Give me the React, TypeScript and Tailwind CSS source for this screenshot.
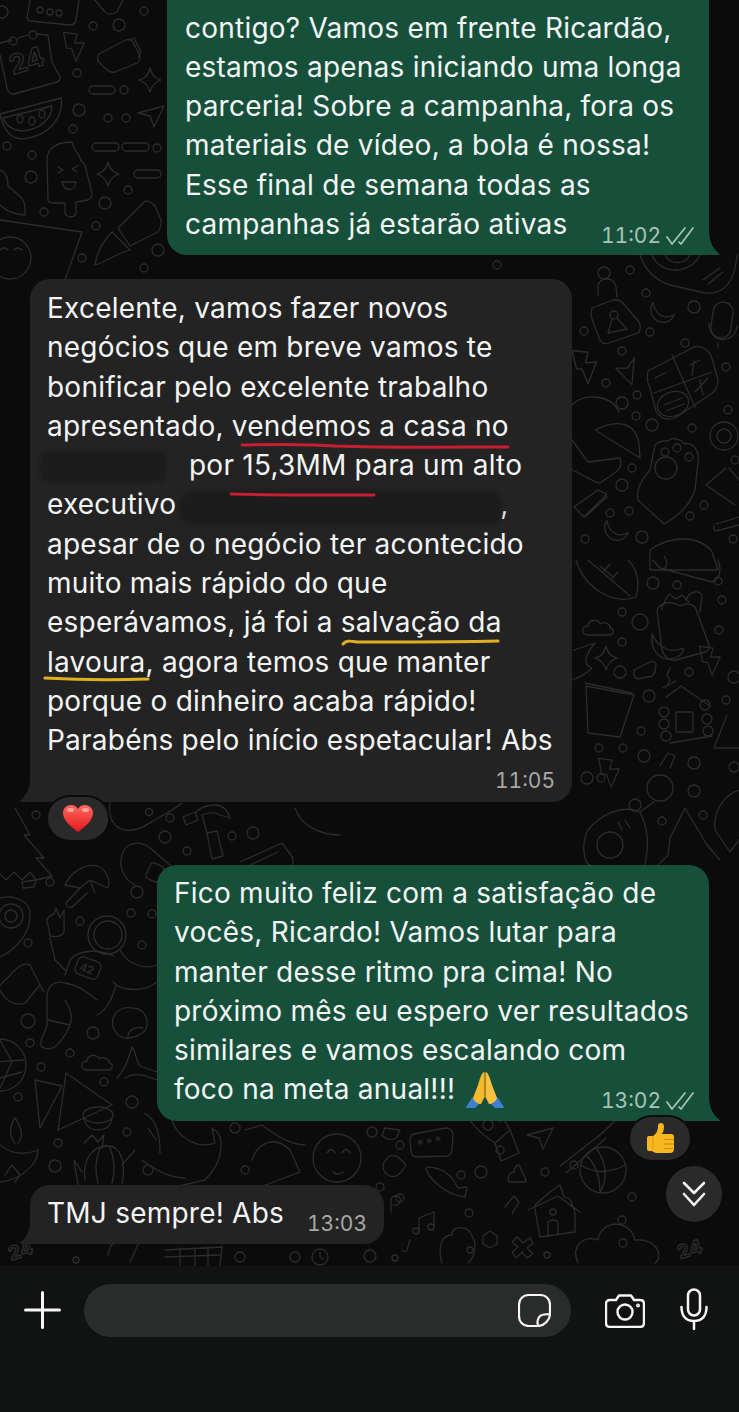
import React from "react";

const lineCls = "block h-[39.3px] leading-[39.3px] whitespace-nowrap";
const timeCls = "text-[21px] leading-[24px] tracking-normal tabular-nums";

function Ticks() {
  return (
    <svg width="28" height="20" viewBox="0 0 28 20" fill="none" stroke="#a9c4b6" strokeWidth="1.700" strokeLinecap="round" strokeLinejoin="round">
      <path d="M1 11l5 7L19 2" />
      <path d="M13 16l2 2L27 2" />
    </svg>
  );
}

function Tail({ side, color }: { side: "l" | "r"; color: string }) {
  return side === "r" ? (
    <svg className="absolute right-[-11px] bottom-0" width="18" height="26" viewBox="0 0 18 26">
      <path d="M0 0H7C7 10 9 18 17 24.500L18 26H0Z" fill={color} />
    </svg>
  ) : (
    <svg className="absolute left-[-10px] bottom-0" width="18" height="28" viewBox="0 0 18 28">
      <path d="M18 0H11C11 10 8 20 1 26L0 28H18Z" fill={color} />
    </svg>
  );
}

function Lightning({ x, y, s = 1, r = 0 }: { x: number; y: number; s?: number; r?: number }) {
  return (
    <path transform={`translate(${x} ${y}) rotate(${r}) scale(${s})`} d="M-10-16L4-12L0-3L10-2L-1 16L-4 2L-9 1Z" />
  );
}
function Sparkle({ x, y }: { x: number; y: number }) {
  return <path transform={`translate(${x} ${y})`} d="M0-12C2-4 5-2 11 0C5 2 2 5 0 12C-2 5-5 2-11 0C-5-2-2-4 0-12Z" />;
}
function Plane({ x, y, r = 0 }: { x: number; y: number; r?: number }) {
  return <path transform={`translate(${x} ${y}) rotate(${r})`} d="M-13-3L13-10L3 11L-1 0Z" />;
}
function Moon({ x, y, r = 0 }: { x: number; y: number; r?: number }) {
  return <path transform={`translate(${x} ${y}) rotate(${r})`} d="M-5-13C-12-4-8 8 4 9C9 9 12 6 14 3C6 6-5 3-5-13Z" />;
}
function Cloud({ x, y }: { x: number; y: number }) {
  return <path transform={`translate(${x} ${y})`} d="M-10 8C-17 8-17-1-10-1C-9-8 0-8 2-3C6-6 13-3 12 1C17 2 16 8 11 8Z" />;
}

const dots: [number, number, number][] = [
  [93, 26, 4], [119, 25, 6], [144, 11, 4], [77, 73, 4], [124, 90, 4], [79, 110, 6], [108, 118, 4], [126, 118, 4], [73, 129, 4], [7, 146, 4], [32, 155, 4], [31, 177, 6], [128, 190, 4], [105, 203, 6], [44, 212, 4], [96, 226, 4], [82, 258, 4], [158, 250, 6], [144, 268, 4], [157, 148, 4],
  [497, 265, 4], [604, 273, 6], [630, 270, 4], [646, 293, 4], [694, 307, 6], [584, 331, 4], [650, 332, 4], [685, 343, 4], [622, 351, 4], [606, 383, 4], [726, 367, 4], [622, 403, 6], [637, 395, 4], [636, 416, 4], [652, 425, 6], [692, 428, 4], [728, 410, 4], [632, 468, 4], [622, 485, 6], [610, 513, 4], [629, 511, 4], [585, 539, 4], [642, 537, 6], [690, 516, 4], [735, 460, 4], [704, 505, 4], [733, 539, 4],
  [653, 583, 6], [677, 585, 4], [718, 581, 4], [722, 600, 4], [622, 612, 4], [640, 622, 8], [622, 642, 4], [719, 630, 4], [620, 672, 6], [689, 672, 4], [649, 696, 6], [726, 700, 4], [734, 677, 6], [641, 731, 4], [599, 748, 4], [623, 748, 4], [644, 756, 6], [601, 778, 4], [587, 778, 6], [694, 763, 6], [734, 767, 5], [635, 805, 6], [694, 791, 6], [703, 815, 4], [662, 821, 4],
  [36, 815, 4], [149, 812, 3.500], [170, 818, 4], [165, 837, 6], [232, 836, 4], [253, 833, 6], [187, 851, 4], [50, 882, 4], [137, 892, 6], [131, 913, 4], [152, 914, 4], [80, 921, 4], [28, 943, 4], [142, 945, 4], [28, 1021, 7], [93, 1033, 6], [30, 1043, 4], [70, 1053, 4], [41, 1067, 4], [104, 1082, 4], [18, 1097, 4], [132, 1102, 6], [127, 1132, 4], [58, 1143, 4], [55, 1166, 6], [148, 1170, 5],
  [235, 1128, 5], [245, 1170, 4], [372, 1132, 5], [400, 1145, 4], [380, 1187, 4], [461, 1175, 4], [481, 1172, 6], [500, 1150, 4], [545, 1172, 4], [574, 1165, 4], [400, 1198, 4], [469, 1213, 4], [632, 1197, 4], [622, 1220, 4], [623, 1243, 4], [295, 1257, 5], [240, 1257, 5], [76, 1260, 3], [470, 1250, 3], [547, 1255, 3], [395, 1258, 3],
];

const pills: [number, number, number, number][] = [
  [89, 86, 26, 8], [92, 143, 27, 8], [122, 143, 27, 8], [134, 170, 27, 8],
];

function Doodles() {
  return (
    <svg className="absolute inset-0" width="739" height="1266" viewBox="0 0 739 1266" fill="none" stroke="#2c2c2c" strokeWidth="1.300" strokeLinecap="round" strokeLinejoin="round">
      {dots.map(([x, y, r], i) => <circle key={i} cx={x} cy={y} r={r} />)}
      {pills.map(([x, y, w, h], i) => <rect key={i} x={x} y={y} width={w} height={h} rx={4} />)}

      {/* top-left */}
      <path d="M30 0L27 17Q27 20 30 21L70 25Q75 25 76 20L79 0" />
      <circle cx="40" cy="10" r="3" /><circle cx="50" cy="12" r="3" /><circle cx="59" cy="13" r="3" />
      <path d="M95 0L105 12Q110 16 117 12L123 0" />
      <circle cx="2" cy="12" r="6" />
      <path d="M0 43L12 40M18 38L28 35M36 34L48 35Q50 50 52 62L60 77Q61 80 57 82L14 94Q8 94 7 88L0 55" />
      <circle cx="13" cy="41" r="4" /><circle cx="33" cy="35" r="4" />
      <text x="13" y="75" fontSize="27" transform="rotate(-18 13 75)" fontFamily="Inter, sans-serif" fontWeight="700">24</text>
      <Lightning x={75} y={46} s={0.95} r={-8} />
      <path d="M99 54L126 40Q130 38 133 42L140 56Q141 60 137 63L115 72Q110 73 107 70L98 61Q97 56 99 54ZM129 40L134 38L141 52L138 58" />
      <Sparkle x={150} y={80} /><Plane x={151} y={116} />
      <path d="M0 114L61 98C64 118 48 137 22 139C10 139 3 128 0 114Z" />
      <path d="M3 118L52 106C52 120 38 130 22 131C12 130 6 126 3 118Z" />
      <ellipse cx="20" cy="119" rx="3" ry="4" /><ellipse cx="32" cy="121" rx="3" ry="4" /><ellipse cx="42" cy="114" rx="3" ry="4" />
      <path d="M48 200L47 160C47 148 57 142 72 142C73 150 78 152 80 158C81 163 84 163 85 165L92 193Q92 198 88 200L76 202L76 212Q76 217 70 217Q65 216 65 212L65 203L53 203Q48 203 48 200Z" />
      <path d="M58 167L63 170L58 173M78 166L72 169L77 172M62 182H76C75 192 64 192 62 182Z" />
      <Sparkle x={108} y={174} />
      <path d="M0 170C7 172 8 180 8 186L22 198Q26 205 25 215C12 214 5 210 0 205" />
      <path d="M118 228L144 202Q148 199 155 206L161 220Q162 226 158 232L130 246ZM112 232L130 250L124 252C115 255 105 262 95 265C97 254 100 245 112 232Z" />
      <circle cx="10" cy="258" r="21" /><path d="M0 220L82 232L65 280M0 250Q5 246 8 250M14 250Q18 246 22 250" />

      {/* right top */}
      <path d="M640 255C645 270 655 280 670 285L705 293C725 295 735 280 737 255" />
      <path d="M652 255C660 275 690 275 700 255M665 255C670 265 685 265 690 255M703 280L720 268M708 284L723 272" />
      <path d="M598 295V287C598 277 614 275 616 287L617 297" />
      <path d="M592 308L613 300Q618 299 622 302L639 322Q642 328 638 333L609 343Q603 345 600 340L593 322Q590 315 592 308Z" />
      <circle cx="614" cy="315" r="4" /><path d="M612 319L608 333L627 329L617 318" />
      <Moon x={660} y={314} r={-10} />
      <rect x="712" y="302" width="20" height="36" rx="10" transform="rotate(8 722 320)" />
      <path d="M709 323C709 344 735 345 737 326M718 343V348" />
      <path d="M648 371L694 347Q704 345 711 355L718 380Q718 391 708 396L675 418Q662 422 656 411L650 388Q646 380 648 371ZM672 355L695 407M654 393L712 372M655 378L665 373M690 365L700 360M694 361L692 375M695 392L708 378M700 380L703 395" />
      <ellipse cx="673" cy="404" rx="16" ry="12" transform="rotate(-20 673 404)" />
      <path d="M664 405L682 398M666 411L684 404" />
      <Lightning x={586} y={366} s={1.100} r={-10} /><Plane x={627} y={369} r={110} />
      <path d="M572 405C585 392 612 395 619 412M595 430C615 420 635 420 639 444L640 458L595 430ZM572 440L588 462L620 458C624 470 615 472 600 483C594 483 585 475 572 470" />
      <path d="M574 507L598 490L607 494L584 517ZM585 517L607 497" />
      <Moon x={614} y={532} r={-10} />
      <path d="M655 445Q660 440 668 441C672 436 682 440 684 444C694 442 700 452 698 462L695 490C690 505 680 515 664 524L638 500C636 490 640 482 650 470Z" />
      <circle cx="666" cy="468" r="11" /><circle cx="665" cy="452" r="4" /><circle cx="677" cy="448" r="4" /><circle cx="689" cy="457" r="4" />
      <circle cx="724" cy="436" r="14" /><circle cx="724" cy="436" r="7" />
      <path d="M726 468L706 485L735 505M729 468L739 480" />
      <path d="M716 524L739 517M714 526Q712 532 720 530L739 525" />
      <path d="M650 550C670 535 700 535 712 552L718 570L650 570Z" />
      <path d="M664 556C670 565 665 570 660 570" />
      <path d="M576 560C585 590 615 605 636 597C640 582 638 570 628 560M588 560L630 596M600 566L612 576M604 571L610 564M612 578L618 572" />
      <path d="M653 560L660 568L712 582Q720 580 720 568L718 560" />
      <path d="M662 610L662 606L669 594L676 599L682 595L689 602M657 610C662 601 672 601 680 606C690 601 696 606 697 612L709 645Q710 650 705 652L676 660Q666 662 662 650Z" />
      <path d="M652 634C650 650 660 660 670 659C680 658 684 652 683 648C672 654 658 648 652 634Z" />
      <path d="M686 600C690 590 700 590 702 596L700 612" />
      <Cloud x={598} y={627} />
      <Sparkle x={606} y={658} />
      <path d="M574 650L595 643C585 655 582 665 592 668C585 675 578 678 572 680" />
      <path d="M634 670L650 662Q654 660 656 664L655 672L652 676L638 679Q634 678 634 674Z" />
      <path d="M670 668L667 675L670 680L667 686" />
      <Lightning x={711} y={660} s={0.950} r={-8} />
      <path d="M586 686L634 695L620 737L588 733Z" /><path d="M585 683L632 693" />
      <path d="M666 697L681 686L710 706M663 688L676 681" />
      <circle cx="664" cy="712" r="5" /><circle cx="664" cy="724" r="5" /><circle cx="666" cy="736" r="5" /><circle cx="705" cy="705" r="5" /><circle cx="707" cy="719" r="5" /><circle cx="708" cy="731" r="5" />
      <rect x="676" y="712" width="17" height="20" rx="1" /><path d="M670 743L712 736" />
      <path d="M727 715L714 748H739" />
      <Lightning x={610} y={772} s={0.950} r={-8} />
      <path d="M660 766L668 753L675 756L670 768" /><circle cx="660" cy="788" r="13" />
      <path d="M654 802L640 812C622 804 600 815 588 830C580 845 585 865 590 865M640 812C650 832 648 850 645 865" />
      <circle cx="610" cy="845" r="13" />
      <path d="M618 822L622 830M625 820L630 828" />
      <path d="M685 808L670 838L668 855L658 865M685 808L707 845L720 860" />
      <path d="M739 790C722 795 713 815 715 830L730 852L739 840" />

      {/* gap between bubbles 2 and 3 */}
      <path d="M15 808L30 835L24 835L44 858L36 858L52 876L36 880L30 872L22 880L14 872L6 880L0 874M22 882L36 880L34 887L23 888Z" />
      <path d="M110 803C108 815 112 828 125 830C140 832 150 822 160 817C170 812 175 808 182 803" />
      <path d="M183 817L186 825L198 820L195 812ZM195 813C205 803 225 800 230 818L220 815C215 812 208 812 202 815L207 833L217 831L223 856L212 859L207 833" />
      <path d="M240 862L282 843L293 858L293 865M248 866L278 852" />
      <path d="M122 855C125 842 140 840 150 848L178 872L176 880M122 855C118 868 125 880 135 885" />
      <rect x="148" y="864" width="14" height="17" rx="3" transform="rotate(25 155 872)" />
      <path d="M295 808C300 825 320 835 340 835" />

      {/* left mid */}
      <path d="M65 885C70 873 85 863 97 866C106 869 111 880 108 888L90 880L80 888ZM80 888L66 903Q66 908 72 907L87 893M90 880L95 893" />
      <path d="M0 898C10 895 30 898 30 915C30 935 15 950 0 957" />
      <circle cx="11" cy="916" r="6" /><circle cx="11" cy="916" r="12" />
      <path d="M48 925C44 918 52 914 54 914L56 908L60 918L64 910L64 925C66 935 60 938 50 936ZM50 938L55 960L65 970" />
      <circle cx="107" cy="935" r="19" /><circle cx="108" cy="935" r="14" />
      <path d="M120 950C128 965 145 970 157 965M114 956C100 950 80 948 70 960L65 975M113 982C122 992 145 992 157 982" />
      <rect x="76" y="959" width="24" height="18" rx="5" transform="rotate(20 88 968)" />
      <text x="80" y="973" fontSize="11" fontWeight="600" fontFamily="Inter, sans-serif" fill="#2c2c2c" stroke="none" transform="rotate(20 88 968)">42</text>
      <path d="M0 985C12 975 20 960 30 965L40 985L44 992M0 990C5 1000 15 1007 25 1003L40 985" />
      <path d="M47 1000C46 985 55 980 65 983C80 985 90 995 97 1000M65 1000C72 1010 72 1020 70 1025L48 1020M47 1000V1025C45 1035 38 1040 42 1047C50 1052 60 1048 70 1025M97 1015C105 1012 112 1000 116 985" />
      <path d="M113 1027C110 1015 120 1006 132 1008C142 1008 148 1016 147 1025C146 1035 130 1040 122 1037C118 1036 115 1032 113 1027ZM128 1037C128 1030 135 1026 143 1028" />
      <circle cx="0" cy="1065" r="26" /><path d="M0 1040L12 1062L0 1088M-5 1062L24 1060M0 1078L22 1072" />
      <Cloud x={97} y={1062} />
      <path d="M117 1078C125 1070 128 1060 132 1047C136 1052 136 1060 140 1066L157 1072M125 1078C135 1072 145 1075 157 1080" />
      <path d="M35 1080L62 1086L40 1128ZM66 1073L112 1105L58 1130Z" />
      <ellipse cx="98" cy="1115" rx="15" ry="8" /><path d="M84 1118Q86 1130 98 1130Q110 1130 112 1118" />
      <path d="M0 1145C12 1155 25 1155 38 1150C38 1165 20 1180 0 1182M15 1143C8 1135 10 1125 15 1118C20 1125 25 1135 18 1143M5 1175L12 1165L20 1175L15 1182" />
      <path d="M85 1180C82 1160 92 1146 108 1146C122 1146 126 1165 122 1183M100 1148C95 1160 95 1172 98 1183M110 1148C115 1160 115 1172 112 1183M84 1143L92 1135L98 1142L104 1135L102 1148M122 1165L135 1150M82 1172L74 1160L78 1185" />
      <path d="M144 1113C154 1118 160 1128 160 1153M148 1128L156 1140" />

      {/* bottom strip */}
      <path d="M178 1113L172 1120C176 1135 195 1150 215 1143L212 1128C225 1135 225 1160 205 1180L175 1187" />
      <path d="M142 1160C155 1170 170 1178 185 1178" />
      <path d="M245 1130L262 1125C275 1135 290 1145 305 1145M252 1160C258 1142 275 1135 290 1150L300 1172L260 1187" />
      <circle cx="337" cy="1158" r="24" />
      <path d="M327 1153Q331 1146 335 1153M342 1153Q346 1146 350 1153M333 1172Q337 1176 344 1172" />
      <path d="M382 1135L385 1128L400 1130L396 1138Q388 1142 382 1135Z" />
      <path d="M386 1160C392 1150 400 1158 406 1165C400 1175 396 1178 390 1176C384 1174 380 1166 386 1160Z" />
      <path d="M414 1134L446 1128Q452 1128 453 1134L452 1150Q452 1155 447 1156L416 1157Q411 1156 411 1151L410 1140Q410 1135 414 1134Z" />
      <text x="418" y="1150" fontSize="14" stroke="none" fill="#2c2c2c" transform="rotate(-10 418 1150)" fontFamily="Inter, sans-serif" letterSpacing="2">***</text>
      <path d="M462 1105C466 1120 482 1135 495 1143L510 1130C505 1118 495 1110 490 1105M495 1143L501 1161L519 1153L510 1130" />
      <circle cx="488" cy="1125" r="5" />
      <path d="M488 1110V1114M478 1120L474 1117M499 1122L503 1119" />
      <Plane x={540} y={1138} />
      <path d="M560 1166L600 1135M566 1173L606 1138M600 1135L618 1118" />
      <path d="M426 1168C428 1178 445 1195 465 1197L467 1187L458 1188L452 1178L445 1172C438 1168 430 1166 426 1168Z" />
      <path d="M509 1182C506 1175 512 1172 514 1172C514 1166 520 1163 520 1166C520 1170 526 1176 526 1182Z" />
      <path d="M505 1207L514 1196L519 1202L512 1214" />
      <path d="M535 1205L550 1192L560 1185L564 1197L570 1199L575 1212L575 1232L540 1237L535 1210ZM528 1210L558 1196L580 1212" />
      <path d="M548 1236V1222Q553 1218 558 1222V1234" /><circle cx="553" cy="1212" r="3" />
      <circle cx="603" cy="1170" r="23" /><path d="M581 1165Q600 1178 626 1165M596 1148Q612 1170 600 1193M586 1155Q600 1168 600 1192" />
      <path d="M391 1212V1200Q391 1196 396 1196Q402 1197 400 1202Q398 1206 393 1205" />
      <path d="M419 1218L434 1212V1226M419 1218V1231" /><circle cx="416" cy="1231" r="3" /><circle cx="431" cy="1227" r="3" />
      <path d="M442 1263C438 1250 440 1235 452 1235C452 1224 470 1226 472 1236C478 1245 474 1258 468 1263" />
      <path d="M490 1231L497 1236L497 1244L490 1248L483 1244L483 1236Z" />
      <path d="M517 1237L523 1243L530 1238L533 1243L527 1248L533 1254L527 1258L522 1252L516 1258L512 1252L518 1247L512 1242Z" />
      <path d="M578 1263C570 1245 585 1235 598 1240C600 1220 630 1218 635 1240C655 1238 665 1255 655 1263" />
      <text x="8" y="1258" fontSize="19" transform="rotate(-18 18 1250)" fontFamily="Inter, sans-serif" fontWeight="700">24</text>
      <text x="677" y="1256" fontSize="19" transform="rotate(-18 689 1248)" fontFamily="Inter, sans-serif" fontWeight="700">24</text>
      <path d="M108 1255C110 1240 125 1232 140 1240L130 1262" />
      <path d="M165 1250L222 1247L220 1266M165 1257L220 1255M180 1248V1266M195 1248V1266M208 1248V1266" />
      <circle cx="320" cy="1257" r="8" /><path d="M320 1252V1257L323 1259" />
      <path d="M410 1240L407 1250Q404 1253 402 1250" /><circle cx="370" cy="1256" r="6" />
    </svg>
  );
}

function Heart() {
  return (
    <svg width="32" height="32" viewBox="0 0 32 32">
      <defs>
        <linearGradient id="hg" x1="0" y1="0" x2="0" y2="1">
          <stop offset="0" stopColor="#ff6a5e" />
          <stop offset="1" stopColor="#e8161b" />
        </linearGradient>
      </defs>
      <path d="M16 29C8 23 1 17 1 10C1 5 5 2 9 2C12 2 14.500 3.500 16 6C17.500 3.500 20 2 23 2C27 2 31 5 31 10C31 17 24 23 16 29Z" fill="url(#hg)" />
      <ellipse cx="8.500" cy="7" rx="3.500" ry="2" fill="#ffb9ae" opacity="0.8" />
      <ellipse cx="23.500" cy="7" rx="3.500" ry="2" fill="#ffb9ae" opacity="0.8" />
    </svg>
  );
}
function Thumb() {
  return (
    <svg width="30" height="32" viewBox="0 0 30 32">
      <path d="M2 15Q2 13 4 13H8C11 11 13 8 13 3Q13 0 16 0Q19 0 19 4Q19 8 17 11H26Q29 11 29 14V26Q29 30 25 30H12Q9 30 7 28H4Q2 28 2 26Z" fill="#f7b81f" />
      <path d="M19 16.500H29M19 21H29M19 25.500H28" stroke="#c98a0c" strokeWidth="1.200" />
      <path d="M8 13V27" stroke="#d8960f" strokeWidth="1" />
    </svg>
  );
}
function Pray() {
  return (
    <svg width="38" height="38" viewBox="0 0 38 38">
      <path d="M0 36L6 27L12 24L14 32L9 37H1Z M38 36L32 27L26 24L24 32L29 37H37Z" fill="#3f7fd0" />
      <path d="M18.500 1C15 2 14 8 12 14L7 27C8 31 13 33 15 33L18.500 26Z" fill="#f7b92c" />
      <path d="M19.500 1C23 2 24 8 26 14L31 27C30 31 25 33 23 33L19.500 26Z" fill="#f9c23c" />
      <path d="M19 2V27" stroke="#c78a12" strokeWidth="1" />
    </svg>
  );
}
function Reaction({ className, children }: { className: string; children: React.ReactNode }) {
  return (
    <div className={`absolute flex h-[43px] w-[60px] items-center justify-center rounded-full bg-[#2a2a2a] ring-[2px] ring-[#0b0b0b] ${className}`}>
      {children}
    </div>
  );
}

export default function App() {
  return (
    <div className="flex h-[1412px] w-[739px] flex-col overflow-hidden bg-[#0b0b0b] font-['Inter',sans-serif] text-[28px] tracking-[0.23px] text-[#f3f5f4]">
      <main className="relative flex h-[1266px] flex-col overflow-hidden px-[30px]">
        <Doodles />

        <section className="relative ml-[137px] h-[255px] rounded-b-[20px] rounded-br-[4px] bg-[#16503b] pl-[18px] pt-[8.500px]">
          <span className={lineCls}>contigo? Vamos em frente Ricardão,</span>
          <span className={lineCls}>estamos apenas iniciando uma longa</span>
          <span className={lineCls}>parceria! Sobre a campanha, fora os</span>
          <span className={lineCls}>materiais de vídeo, a bola é nossa!</span>
          <span className={lineCls}>Esse final de semana todas as</span>
          <div className="flex items-start">
            <span className={lineCls}>campanhas já estarão ativas</span>
            <div className={`ml-auto mr-[15px] mt-[19px] flex items-center gap-[5px] text-[#a9c4b6] ${timeCls}`}>
              11:02 <Ticks />
            </div>
          </div>
          <Tail side="r" color="#16503b" />
        </section>

        <section className="relative mt-[24px] h-[523px] w-[542px] rounded-[20px] rounded-bl-[4px] bg-[#232323] pl-[17px] pt-[10px]">
          <span className={lineCls}>Excelente, vamos fazer novos</span>
          <span className={lineCls}>negócios que em breve vamos te</span>
          <span className={lineCls}>bonificar pelo excelente trabalho</span>
          <span className={lineCls}>apresentado, vendemos a casa no</span>
          <span className={`${lineCls} pl-[142px]`}>por 15,3MM para um alto</span>
          <span className={lineCls}>executivo<span className="ml-[324px]">,</span></span>
          <span className={lineCls}>apesar de o negócio ter acontecido</span>
          <span className={lineCls}>muito mais rápido do que</span>
          <span className={lineCls}>esperávamos, já foi a salvação da</span>
          <span className={lineCls}>lavoura, agora temos que manter</span>
          <span className={lineCls}>porque o dinheiro acaba rápido!</span>
          <span className={lineCls}>Parabéns pelo início espetacular! Abs</span>
          <div className={`mr-[17px] mt-[8px] text-right text-[#a8a8a8] ${timeCls}`}>11:05</div>

          <div className="absolute left-[10px] top-[172px] h-[31px] w-[126px] rounded-[8px] bg-[#1c1c1c] blur-[1.5px]" />
          <div className="absolute left-[150px] top-[212px] h-[34px] w-[322px] rounded-[14px] bg-[#1c1c1c] blur-[2px]" />
          <svg className="absolute left-0 top-0" width="542" height="420" fill="none" strokeLinecap="round" strokeWidth="3">
            <path d="M212 166C250 165 280 165 305 167C360 169 430 168 478 168" stroke="#c81e32" />
            <path d="M201 215C250 216 300 216 344 216" stroke="#c81e32" />
            <path d="M313 365C316 361 320 362 328 363C380 363 430 363 468 362" stroke="#e0b11e" />
            <path d="M15 399C50 401 90 401 118 400" stroke="#e0b11e" />
          </svg>
          <Reaction className="left-[18px] top-[518px]"><Heart /></Reaction>
          <Tail side="l" color="#232323" />
        </section>

        <section className="relative ml-[127px] mt-[63px] h-[256px] rounded-[20px] rounded-br-[4px] bg-[#16503b] pl-[17px] pt-[9px]">
          <span className={lineCls}>Fico muito feliz com a satisfação de</span>
          <span className={lineCls}>vocês, Ricardo! Vamos lutar para</span>
          <span className={lineCls}>manter desse ritmo pra cima! No</span>
          <span className={lineCls}>próximo mês eu espero ver resultados</span>
          <span className={lineCls}>similares e vamos escalando com</span>
          <div className="flex items-start">
            <span className={`${lineCls} flex items-center gap-[11px]`}>foco na meta anual!!! <Pray /></span>
            <div className={`ml-auto mr-[15px] mt-[19px] flex items-center gap-[5px] text-[#a9c4b6] ${timeCls}`}>
              13:02 <Ticks />
            </div>
          </div>
          <Reaction className="right-[19px] top-[252px]"><Thumb /></Reaction>
          <Tail side="r" color="#16503b" />
        </section>

        <section className="relative mt-[64px] flex h-[59px] w-[354px] rounded-[20px] rounded-bl-[4px] bg-[#232323] pl-[17px] pt-[9px]">
          <span className={lineCls}>TMJ sempre! Abs</span>
          <span className={`ml-auto mr-[17px] mt-[18px] text-[#a8a8a8] ${timeCls}`}>13:03</span>
          <Tail side="l" color="#232323" />
        </section>

        <button className="absolute left-[666px] top-[1166px] flex h-[56px] w-[56px] items-center justify-center rounded-full bg-[#2a2a2a]">
          <svg width="26" height="28" viewBox="0 0 26 28" fill="none" stroke="#f3f3f3" strokeWidth="2.600" strokeLinecap="round" strokeLinejoin="round">
            <path d="M3 3l10 10L23 3" />
            <path d="M3 14l10 11 10-11" />
          </svg>
        </button>
      </main>

      <footer className="flex h-[146px] items-start bg-[#111212] pl-[24px] pt-[18px]">
        <svg className="mt-[7px]" width="37" height="38" viewBox="0 0 37 38" fill="none" stroke="#f5f5f5" strokeWidth="3" strokeLinecap="round">
          <path d="M18.500 1.500V36.500M1.500 19H35.500" />
        </svg>
        <div className="ml-[23px] flex h-[53px] w-[487px] items-center justify-end rounded-full bg-[#2a2b2b] pr-[20px]">
          <svg width="33" height="33" viewBox="0 0 33 33" fill="none" stroke="#f5f5f5" strokeWidth="2.200" strokeLinejoin="round">
            <path d="M20 32H11C5 32 1 28 1 22V11C1 5 5 1 11 1H22C28 1 32 5 32 11V20C32 26 26 32 20 32Z" />
            <path d="M20 32C19 28 19 25 22 22C25 20 28 20 32 20" />
          </svg>
        </div>
        <svg className="ml-[34px] mt-[10px]" width="40" height="34" viewBox="0 0 40 34" fill="none" stroke="#f5f5f5" strokeWidth="2.400" strokeLinejoin="round">
          <path d="M5 6H11L14 1.500H26L29 6H35Q39 6 39 10V29Q39 33 35 33H5Q1 33 1 29V10Q1 6 5 6Z" />
          <circle cx="20" cy="18" r="7.500" />
          <circle cx="33" cy="11.500" r="0.800" />
        </svg>
        <svg className="ml-[35px] mt-[4px]" width="28" height="42" viewBox="0 0 28 42" fill="none" stroke="#f5f5f5" strokeWidth="2.500" strokeLinecap="round">
          <rect x="8" y="1.500" width="12" height="26" rx="6" />
          <path d="M1.500 19C1.500 28 6 33 14 33C22 33 26.500 28 26.500 19M14 33V41" />
        </svg>
      </footer>
    </div>
  );
}
